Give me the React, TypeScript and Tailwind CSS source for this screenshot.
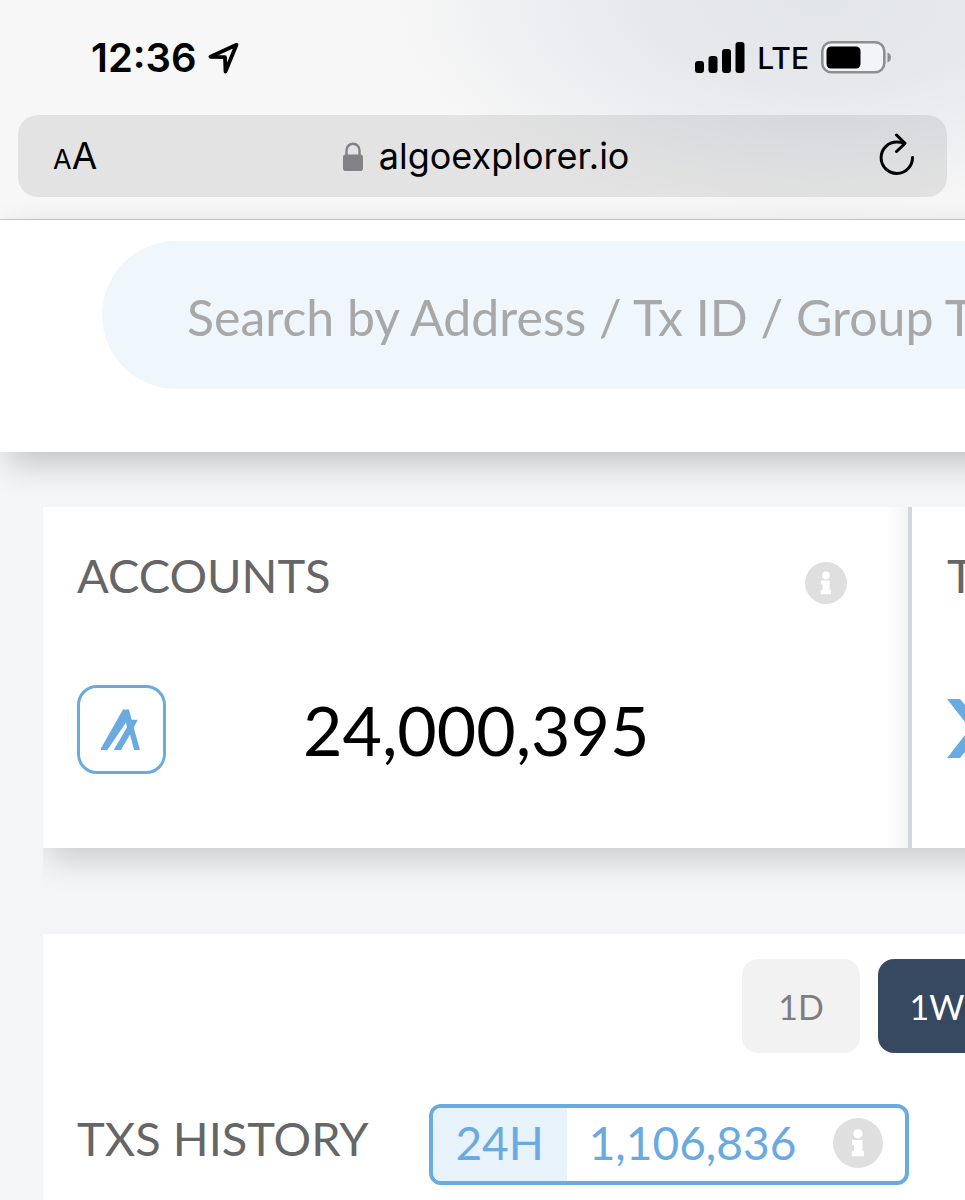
import { ReactNode } from "react";

const ranges = [
  { label: "1D", active: false },
  { label: "1W", active: true },
];

function SignalIcon() {
  return (
    <svg width="50" height="32" viewBox="0 0 50 32" fill="currentColor" aria-hidden="true">
      <rect x="0" y="19" width="9" height="12" rx="3" />
      <rect x="13.5" y="14" width="9" height="17" rx="3" />
      <rect x="27" y="7" width="9" height="24" rx="3" />
      <rect x="40.5" y="0" width="9" height="31" rx="3" />
    </svg>
  );
}

function BatteryIcon() {
  return (
    <svg width="71" height="33" viewBox="0 0 71 33" aria-hidden="true">
      <rect x="1.3" y="1.3" width="62" height="30" rx="9" fill="#f3f4f7" stroke="#8d8e91" strokeWidth="2.6" />
      <rect x="5.5" y="5.5" width="34" height="22" rx="4.5" fill="#000" />
      <path d="M66.5 11.5c2 .6 3.5 2.4 3.5 5s-1.5 4.4-3.5 5z" fill="#8d8e91" />
    </svg>
  );
}

function LocationIcon() {
  return (
    <svg width="32" height="32" viewBox="0 0 32 32" fill="none" aria-hidden="true">
      <path
        d="M28.5 2.8 2.5 14.800l14.500.4.5 14.300z"
        stroke="currentColor"
        strokeWidth="3.800"
        strokeLinejoin="round"
      />
    </svg>
  );
}

function LockIcon() {
  return (
    <svg width="20" height="29" viewBox="0 0 20 29" aria-hidden="true">
      <path d="M3.500 14V8.500a6.500 6.800 0 0 1 13 0V14" fill="none" stroke="#828187" strokeWidth="2.400" />
      <rect x="0" y="12.500" width="20" height="16.500" rx="2.800" fill="#828187" />
    </svg>
  );
}

function ReloadIcon() {
  return (
    <svg
      width="36"
      height="42"
      viewBox="0 0 36 42"
      fill="none"
      stroke="currentColor"
      strokeWidth="3"
      strokeLinecap="round"
      strokeLinejoin="round"
      aria-hidden="true"
    >
      <path d="M33.500 24.500A15.700 15.700 0 1 1 17.800 9q4 0 7.500 1" />
      <path d="m17.500 2 8.500 8.300L17.500 18.500" />
    </svg>
  );
}

function AlgoLogo() {
  return (
    <svg width="42" height="42" viewBox="0 0 42 42" fill="#69aae0" aria-hidden="true">
      <path d="M-1 41 22 .5H28l2.600 10.200h6.200L32.700 18.500 39 41h-5.900l-4.100-15.500L20 41h-7.300l13.200-22.500-.9-5L6.300 41z" />
    </svg>
  );
}

function InfoIcon({ size }: { size: number }) {
  return (
    <svg width={size} height={size} viewBox="0 0 42 42" aria-hidden="true">
      <circle cx="21" cy="21" r="21" fill="#dfdfdf" />
      <circle cx="21" cy="13.300" r="3.900" fill="#fff" />
      <path d="M16 18.500h8.700v9.500H26v4.200H15.800V28h1.800v-5.400H16z" fill="#fff" />
    </svg>
  );
}

function CardTitle({ children }: { children: ReactNode }) {
  return <h2 className="text-[47px] leading-[56px] text-[#666666]">{children}</h2>;
}

function BrowserBar() {
  return (
    <div className="border-b border-[#c9c9cb] bg-[#f7f7f7] bg-[radial-gradient(ellipse_45%_100%_at_85%_0%,#e2e5ea_0%,#e6e8ec_40%,#f7f7f7_100%)] px-[18px] pb-[22px] font-[Inter,sans-serif] text-black">
      <div className="flex h-[115px] items-center justify-between pr-[55px] pl-[73px]">
        <div className="flex items-center gap-[11px]">
          <time className="text-[40px] leading-12 font-semibold">12:36</time>
          <LocationIcon />
        </div>
        <div className="flex items-center gap-3">
          <SignalIcon />
          <span className="text-[30px] leading-10 font-medium">LTE</span>
          <BatteryIcon />
        </div>
      </div>
      <div className="flex h-[82px] items-center justify-between rounded-[20px] bg-black/8 pr-8 pb-1 pl-[35px]">
        <button type="button" aria-label="Text size" className="flex items-baseline pt-2">
          <span className="text-[27px] leading-10">A</span>
          <span className="text-[37px] leading-10">A</span>
        </button>
        <div className="flex items-center gap-4 pt-1 pr-1">
          <LockIcon />
          <span className="text-[36px] leading-12">algoexplorer.io</span>
        </div>
        <button type="button" aria-label="Reload">
          <ReloadIcon />
        </button>
      </div>
    </div>
  );
}

export default function App() {
  return (
    <div className="min-h-screen overflow-hidden bg-[#f4f5f7] font-[Lato,sans-serif]">
      <BrowserBar />

      <header className="-mr-16 bg-white pt-[21px] pb-[63px] pl-[102px] shadow-[8px_12px_30px_0px_rgba(0,0,0,0.2)]">
        <input
          type="text"
          aria-label="Search"
          placeholder="Search by Address / Tx ID / Group T"
          className="h-[148px] w-full rounded-l-full bg-[#eff6fc] pt-1 pl-[85px] text-[50px] text-[#666666] outline-none placeholder:text-[#a8a8a8]"
        />
      </header>

      <main className="pt-[55px] pl-[43px]">
        {/* shadow is cut at the row's left edge, like the scroll container does */}
        <div className="-mr-16 flex h-[341px] gap-1 bg-[#d2d5d9] shadow-[6px_12px_30px_0px_rgba(0,0,0,0.17)] [clip-path:inset(0_0_-60px_0)]">
          <section className="flex-1 bg-white bg-linear-to-l from-[#f4f4f5] to-white to-[22px] pt-10 pr-[61px] pl-[34px]">
            <div className="flex items-start justify-between">
              <CardTitle>ACCOUNTS</CardTitle>
              <button type="button" aria-label="About accounts" className="pt-[15px]">
                <InfoIcon size={42} />
              </button>
            </div>
            <div className="mt-[81px] flex items-center">
              <div className="flex size-[89px] items-center justify-center rounded-[20px] border-[3px] border-[#69aae0]">
                <AlgoLogo />
              </div>
              <p className="ml-[137px] text-[68px] leading-20 text-black">24,000,395</p>
            </div>
          </section>
          <section className="w-[117px] bg-white pt-10 pl-[35px]">
            <CardTitle>T</CardTitle>
            <svg className="mt-24" width="59" height="59" viewBox="0 0 59 59" fill="#69aae0" aria-hidden="true">
              <path d="M0 0h13l16.500 20L46 0h13L36 29.500 59 59H46L29.500 39 13 59H0l23-29.500z" />
            </svg>
          </section>
        </div>

        <section className="mt-[86px] bg-white pt-[25px] pb-4">
          <div className="-mr-[31px] flex justify-end gap-[18px]">
            {ranges.map((range) => (
              <button
                key={range.label}
                type="button"
                aria-pressed={range.active}
                className={`h-[94px] w-[118px] rounded-2xl text-[34px] ${
                  range.active ? "bg-[#374961] text-white" : "bg-[#f2f2f2] text-[#7d7d7d]"
                }`}
              >
                {range.label}
              </button>
            ))}
          </div>
          <div className="mt-[51px] flex items-start pl-[34px]">
            <div className="pt-[6px]">
              <CardTitle>TXS HISTORY</CardTitle>
            </div>
            <div className="ml-[60px] flex h-[81px] w-[480px] items-center overflow-hidden rounded-xl border-4 border-[#69aae0] text-[46px] leading-[56px] text-[#69aae0]">
              <span className="flex h-full w-[134px] items-center justify-center bg-[#e8f2fb] pb-1">24H</span>
              <span className="flex-1 pb-1 pl-[22px]">1,106,836</span>
              <button type="button" aria-label="About transaction history" className="mr-[22px] pb-1">
                <InfoIcon size={50} />
              </button>
            </div>
          </div>
        </section>
      </main>
    </div>
  );
}
